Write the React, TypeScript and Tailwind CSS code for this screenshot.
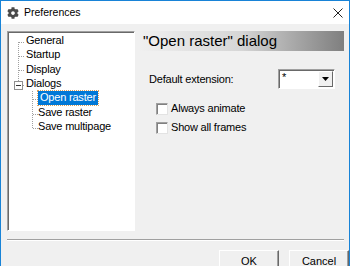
import React from 'react'
import { FaCog } from 'react-icons/fa'

const ui = { fontFamily: '"Liberation Sans", Arial, sans-serif' }

const treeRows = [
  { label: 'General', level: 1 },
  { label: 'Startup', level: 1 },
  { label: 'Display', level: 1 },
  { label: 'Dialogs', level: 1 },
  { label: 'Open raster', level: 2, selected: true },
  { label: 'Save raster', level: 2 },
  { label: 'Save multipage', level: 2 },
]

// dotted connector lines of the tree view
const TreeLines: React.FC = () => {
  const y = (i: number) => 9.5 + 14.4 * i
  const dot = { stroke: '#a0a0a0', strokeWidth: 1, strokeDasharray: '1 1' }
  return (
    <svg className="absolute left-0 top-0" width="126" height="198" shapeRendering="crispEdges">
      <line x1="10.5" y1={y(0)} x2="10.5" y2={y(3) - 4} {...dot} />
      {[0, 1, 2].map((i) => (
        <line key={i} x1="11" y1={Math.round(y(i)) + 0.5} x2="17" y2={Math.round(y(i)) + 0.5} {...dot} />
      ))}
      <rect x="6.5" y={Math.round(y(3)) - 3.5} width="8" height="8" fill="white" stroke="#919191" />
      <line x1="8" y1={Math.round(y(3)) + 0.5} x2="13" y2={Math.round(y(3)) + 0.5} stroke="#333" />
      <line x1="15" y1={Math.round(y(3)) + 0.5} x2="17" y2={Math.round(y(3)) + 0.5} {...dot} />
      <line x1="24.5" y1={y(3) + 6} x2="24.5" y2={Math.round(y(6)) + 1} {...dot} />
      {[4, 5, 6].map((i) => (
        <line key={i} x1="25" y1={Math.round(y(i)) + 0.5} x2="30" y2={Math.round(y(i)) + 0.5} {...dot} />
      ))}
    </svg>
  )
}

const Checkbox: React.FC<{ label: string }> = ({ label }) => (
  <div className="flex items-center h-[19px]">
    <div className="w-[12px] h-[12px] bg-white border border-[#a0a0a0] border-r-[#e3e3e3] border-b-[#e3e3e3] shadow-[inset_1px_1px_0_#808080]" />
    <span className="ml-[3px] text-[11px] tracking-[-0.2px] text-black">{label}</span>
  </div>
)

const Button: React.FC<{ label: string }> = ({ label }) => (
  <div className="w-[60px] h-[23px] bg-[#f0f0f0] border border-white border-r-[#696969] border-b-[#696969] shadow-[inset_-1px_-1px_0_#a0a0a0] flex items-center justify-center text-[11px] text-black">
    {label}
  </div>
)

export default function App() {
  return (
    <div
      className="w-[350px] h-[266px] overflow-hidden bg-[#f0f0f0] border border-b-0 border-[#1883d7] flex flex-col"
      style={ui}
    >
      {/* Title bar */}
      <div className="h-[23px] bg-white flex items-center shrink-0">
        <FaCog className="ml-[6px] text-[#4a4a4a]" size={12} />
        <span className="ml-[5px] text-[10.5px] text-black">Preferences</span>
        <svg className="ml-auto mr-[6px]" width="10" height="10" viewBox="0 0 10 10">
          <path d="M0.5 0.5 L9.5 9.5 M9.5 0.5 L0.5 9.5" stroke="#222" strokeWidth="1" />
        </svg>
      </div>

      <div className="flex flex-col pl-[6px] pr-[5px] pt-[7px]">
        <div className="flex gap-[4px]">
          {/* Tree view */}
          <div className="relative w-[128px] h-[200px] bg-white border border-[#a0a0a0] border-r-white border-b-white shadow-[inset_1px_1px_0_#696969] pt-[1px]">
            <TreeLines />
            {treeRows.map((r) => (
              <div
                key={r.label}
                className={`h-[14.4px] flex items-center text-[11px] tracking-[-0.2px] ${r.level === 1 ? 'pl-[18px]' : 'pl-[30px]'}`}
              >
                <span
                  className={
                    r.selected
                      ? 'px-[2px] h-[14px] leading-[13px] bg-[#0078d7] text-white outline outline-1 outline-dotted outline-[#d9a05b]'
                      : 'text-black'
                  }
                >
                  {r.label}
                </span>
              </div>
            ))}
          </div>

          {/* Right page */}
          <div className="flex-1 flex flex-col">
            <div className="h-[20px] bg-gradient-to-r from-[#f0f0f0] via-[#d6d6d6] to-[#7f7f7f] flex items-center pl-[4px] text-[15px] text-black">
              "Open raster" dialog
            </div>
            <div className="flex items-center mt-[18px] pl-[10px]">
              <span className="text-[11px] tracking-[-0.2px] text-black">Default extension:</span>
              <div className="ml-auto mr-[9px] w-[57px] h-[20px] bg-white border border-[#a0a0a0] border-r-white border-b-white shadow-[inset_1px_1px_0_#696969] flex">
                <span className="flex-1 pl-[3px] text-[11px] leading-[14px] text-black">*</span>
                <div className="w-[15px] h-[16px] mt-[1px] mr-[1px] bg-[#f0f0f0] border border-white border-r-[#696969] border-b-[#696969] flex items-center justify-center">
                  <svg width="7" height="4" viewBox="0 0 7 4">
                    <path d="M0 0 H7 L3.5 4 Z" fill="#000" />
                  </svg>
                </div>
              </div>
            </div>
            <div className="flex flex-col mt-[10px] pl-[17px]">
              <Checkbox label="Always animate" />
              <Checkbox label="Show all frames" />
            </div>
          </div>
        </div>

        {/* Separator */}
        <div className="mt-[8px] h-[2px] border-t border-[#a0a0a0] border-b border-b-white" />

        {/* Buttons */}
        <div className="flex justify-end gap-[10px] mt-[9px] -mr-[5px]">
          <Button label="OK" />
          <Button label="Cancel" />
        </div>
      </div>
    </div>
  )
}
